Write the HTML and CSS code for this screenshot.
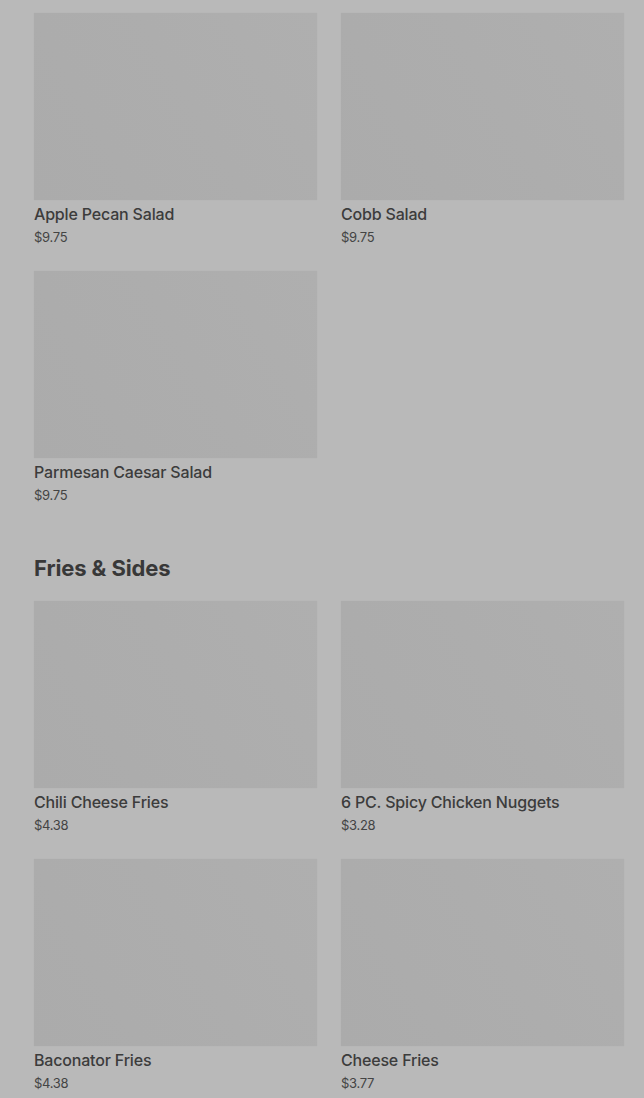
FILE: index.html
```html
<!DOCTYPE html>
<html lang="en">
<head>
<meta charset="utf-8">
<title>Menu</title>
<link rel="stylesheet" href="styles.css">
</head>
<body>
<main class="page">
  <section class="section">
    <div class="grid">
      <div class="card"><div class="thumb"></div><div class="name">Apple Pecan Salad</div><div class="price">$9.75</div></div>
      <div class="card"><div class="thumb"></div><div class="name">Cobb Salad</div><div class="price">$9.75</div></div>
      <div class="card"><div class="thumb"></div><div class="name">Parmesan Caesar Salad</div><div class="price">$9.75</div></div>
    </div>
  </section>
  <section class="section">
    <h2 class="heading">Fries &amp; Sides</h2>
    <div class="grid">
      <div class="card"><div class="thumb"></div><div class="name">Chili Cheese Fries</div><div class="price">$4.38</div></div>
      <div class="card"><div class="thumb"></div><div class="name">6 PC. Spicy Chicken Nuggets</div><div class="price">$3.28</div></div>
      <div class="card"><div class="thumb"></div><div class="name">Baconator Fries</div><div class="price">$4.38</div></div>
      <div class="card"><div class="thumb"></div><div class="name">Cheese Fries</div><div class="price">$3.77</div></div>
    </div>
  </section>
</main>
</body>
</html>
```
FILE: styles.css
```css
html, body {
  margin: 0;
  padding: 0;
  background: #b9b9b9;
  height: 1098px;
  overflow: hidden;
}
body {
  font-family: Inter, "Noto Sans", "Liberation Sans", sans-serif;
  color: #3b3b3b;
}
.page {
  padding: 13px 20px 0 34px;
  display: flex;
  flex-direction: column;
  gap: 49px;
}
.grid {
  display: grid;
  grid-template-columns: 283px 283px;
  column-gap: 24px;
  row-gap: 24px;
}
.thumb {
  height: 187px;
  background: linear-gradient(60deg, #ababab 0%, #adadad 55%, #afafaf 100%);
  box-shadow: 0 0 1px rgba(0,0,0,0.05);
}
.name {
  margin-top: 4px;
  font-size: 16px;
  line-height: 20px;
  font-weight: 500;
  letter-spacing: -0.18px;
  color: #3c3c3c;
}
.price {
  margin-top: 3px;
  font-size: 13px;
  line-height: 20px;
  color: #444;
  letter-spacing: -0.3px;
}
.heading {
  margin: 0 0 19px;
  font-size: 22px;
  line-height: 28px;
  font-weight: 700;
  letter-spacing: -0.1px;
  color: #383838;
}
```
